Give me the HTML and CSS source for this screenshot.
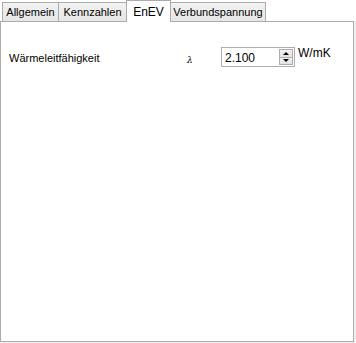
FILE: index.html
```html
<!DOCTYPE html>
<html lang="de">
<head>
  <meta charset="UTF-8">
  <title>EnEV</title>
  <link rel="stylesheet" href="styles.css">
</head>
<body>
  <div class="tabs">
    <div class="tab tab-allg">Allgemein</div>
    <div class="tab tab-kenn">Kennzahlen</div>
    <div class="tab tab-enev active">EnEV</div>
    <div class="tab tab-verb">Verbundspannung</div>
  </div>

  <div class="panel">
    <div class="row">
      <span class="label">Wärmeleitfähigkeit</span>
      <span class="symbol">λ</span>
      <div class="spin">
        <span class="value">2.100</span>
        <div class="spin-buttons">
          <div class="spin-btn"><span class="arrow-up"></span></div>
          <div class="spin-btn"><span class="arrow-down"></span></div>
        </div>
      </div>
      <span class="unit">W/mK</span>
    </div>
  </div>
</body>
</html>
```

FILE: styles.css
```css
body {
  margin: 0;
  background-color: #f0f0f0;
  font-family: 'Liberation Sans', Arial, sans-serif;
  font-size: 11px;
  color: #000;
}
.tabs {
  display: flex;
  align-items: flex-end;
  height: 21px;
  padding-left: 2px;
  background-color: #fff;
}
.tab {
  box-sizing: border-box;
  height: 19px;
  padding-top: 3px;
  text-align: center;
  border: 1px solid #acacac;
  border-bottom: none;
  background: linear-gradient(#f2f2f2, #e6e6e6);
  margin-left: -1px;
}
.tab:first-child {
  margin-left: 0;
}
.tab-allg { width: 57px; }
.tab-kenn { width: 69px; }
.tab-enev { width: 45px; }
.tab-verb { width: 96px; }
.tab.active {
  height: 22px;
  padding-top: 4px;
  background: #fff;
  margin-bottom: -1px;
  position: relative;
  z-index: 1;
  font-size: 12px;
}
.panel {
  box-sizing: border-box;
  width: 354px;
  height: 321px;
  background-color: #fff;
  border: 1px solid #acacac;
}
.row {
  display: flex;
  align-items: flex-start;
  padding-top: 25px;
}
.label {
  margin-left: 8px;
  width: 178px;
  padding-top: 5px;
}
.symbol {
  width: 34px;
  padding-top: 8px;
  font-family: 'DejaVu Serif', serif;
  font-size: 9px;
  font-style: italic;
}
.spin {
  display: flex;
  box-sizing: border-box;
  width: 74px;
  height: 20px;
  border: 1px solid #abadb3;
  background: #fff;
}
.value {
  flex: 1;
  padding: 3px 0 0 3px;
  font-size: 12px;
}
.spin-buttons {
  display: flex;
  flex-direction: column;
  width: 14px;
  padding: 1px 1px 1px 0;
}
.spin-btn {
  flex: 1;
  display: flex;
  align-items: center;
  justify-content: center;
  border: 1px solid #adadad;
  background: linear-gradient(#f2f2f2, #e3e3e3);
}
.spin-btn + .spin-btn {
  border-top: none;
}
.arrow-up {
  border-left: 3px solid transparent;
  border-right: 3px solid transparent;
  border-bottom: 3px solid #000;
}
.arrow-down {
  border-left: 3px solid transparent;
  border-right: 3px solid transparent;
  border-top: 3px solid #000;
}
.unit {
  margin-left: 3px;
  margin-top: -1px;
  font-size: 12px;
}
```
